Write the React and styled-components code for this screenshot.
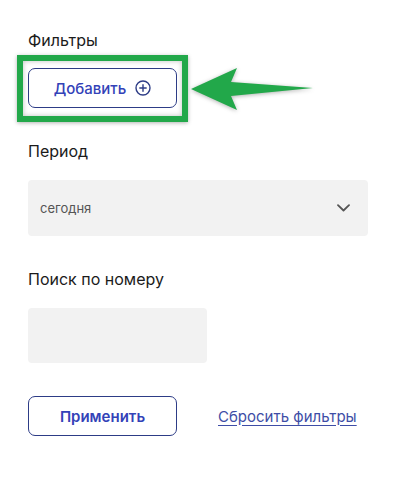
import React from "react";
import styled, { createGlobalStyle } from "styled-components";

const Global = createGlobalStyle`
  html, body { margin: 0; padding: 0; background: #ffffff; }
  body { font-family: Inter, "Noto Sans", "Liberation Sans", sans-serif; color: #1b1b1b; }
`;

const Page = styled.div`
  display: flex;
  flex-direction: column;
  gap: 33px;
  padding: 30px 48px 40px 28px;
  width: 340px;
`;

const Section = styled.section`
  display: flex;
  flex-direction: column;
  align-items: flex-start;
  gap: ${(p) => p.$gap || 19}px;
`;

const Label = styled.div`
  font-size: 16px;
  line-height: 20px;
  font-weight: 400;
  color: #1b1b1b;
`;

const Highlight = styled.div`
  position: relative;
  &::before {
    content: "";
    position: absolute;
    top: -13px;
    bottom: -14px;
    left: -11px;
    right: -11px;
    border: 6px solid #22a84a;
    box-shadow: inset 0 0 5px rgba(0, 0, 0, 0.25), 0 1px 4px rgba(0, 0, 0, 0.3);
    pointer-events: none;
  }
`;

const Arrow = styled.svg`
  position: absolute;
  left: 163px;
  top: 0;
  overflow: visible;
  filter: drop-shadow(0 1px 2px rgba(0, 0, 0, 0.3));
`;

const OutlineButton = styled.button`
  display: flex;
  align-items: center;
  justify-content: center;
  gap: 9px;
  width: 149px;
  height: 40px;
  box-sizing: border-box;
  border: 1px solid #2d3c86;
  border-radius: 7px;
  background: #ffffff;
  color: #3342b8;
  font-family: inherit;
  font-size: 15px;
  font-weight: ${(p) => (p.$strong ? 600 : 500)};
  padding: 0;
  cursor: pointer;
`;

const SelectBox = styled.div`
  display: flex;
  align-items: center;
  justify-content: space-between;
  box-sizing: border-box;
  width: 340px;
  height: 56px;
  padding: 0 18px 0 12px;
  border-radius: 4px;
  background: #f2f2f2;
  font-size: 13px;
  color: #555555;
`;

const InputBox = styled.div`
  width: 179px;
  height: 55px;
  border-radius: 4px;
  background: #f2f2f2;
`;

const Actions = styled.div`
  display: flex;
  align-items: center;
  gap: 41px;
`;

const ResetLink = styled.a`
  font-size: 15px;
  color: #3e4da6;
  text-decoration: underline;
  text-underline-offset: 3px;
  cursor: pointer;
`;

const PlusIcon = () => (
  <svg width="16" height="16" viewBox="0 0 16 16" fill="none">
    <circle cx="8" cy="8" r="7" stroke="#2d3c86" strokeWidth="1.4" />
    <path d="M8 4.8v6.4M4.8 8h6.4" stroke="#2d3c86" strokeWidth="1.4" strokeLinecap="round" />
  </svg>
);

const Chevron = () => (
  <svg width="13" height="8" viewBox="0 0 13 8" fill="none">
    <path d="M1 1.2l5.5 5.3L12 1.2" stroke="#555555" strokeWidth="1.8" strokeLinecap="round" strokeLinejoin="round" />
  </svg>
);

export default function App() {
  return (
    <>
      <Global />
      <Page>
        <Section $gap={18}>
          <Label>Фильтры</Label>
          <Highlight>
            <OutlineButton>
              Добавить <PlusIcon />
            </OutlineButton>
            <Arrow width="124" height="44" viewBox="0 0 124 44">
              <path
                d="M0 21 L46 0 L40 14 L122 20 L40 28 L46 42 Z"
                fill="#22a84a"
              />
            </Arrow>
          </Highlight>
        </Section>
        <Section>
          <Label>Период</Label>
          <SelectBox>
            <span>сегодня</span>
            <Chevron />
          </SelectBox>
        </Section>
        <Section>
          <Label>Поиск по номеру</Label>
          <InputBox />
        </Section>
        <Actions>
          <OutlineButton $strong>Применить</OutlineButton>
          <ResetLink>Сбросить фильтры</ResetLink>
        </Actions>
      </Page>
    </>
  );
}
